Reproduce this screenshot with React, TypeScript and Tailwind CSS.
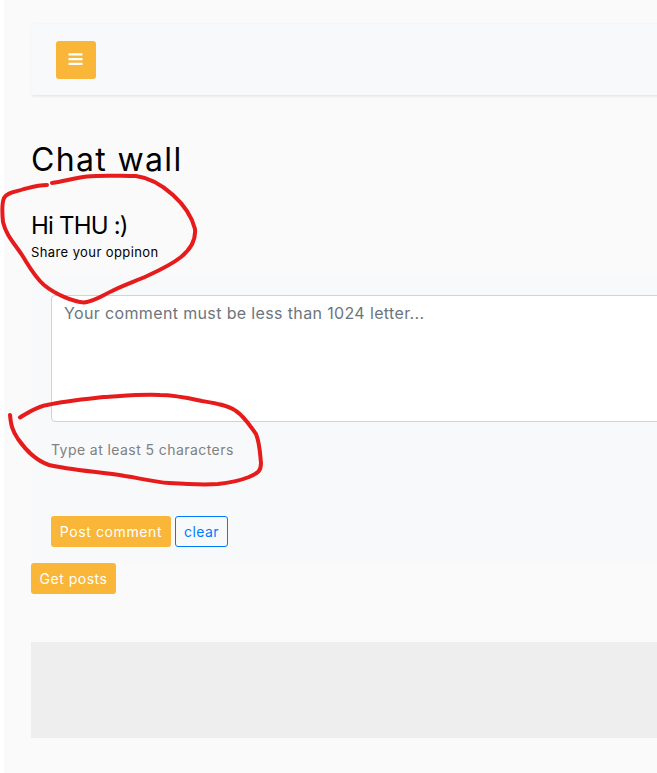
import React from "react";

const yellow =
  "flex items-center justify-center rounded-[3px] bg-[#f9b639] text-[14px] text-white";

export default function App() {
  return (
    <div className="relative h-[773px] w-[657px] overflow-hidden bg-white pl-1 font-['Inter','Open_Sans',sans-serif]">
      <div className="flex h-full flex-col bg-[#fafafa] pl-[27px] pt-6">
        <nav className="-mr-4 flex h-[71px] shrink-0 items-center bg-[#f8f9fb] pl-[25px] shadow-[1px_1px_3px_rgba(0,0,0,0.1)]">
          <button
            aria-label="Menu"
            className="mt-[1px] flex h-[38px] w-10 items-start rounded-[3px] bg-[#f9b639] pl-3 pt-3"
          >
            <svg width="15" height="12" viewBox="0 0 15 12">
              <path
                d="M0.5 0.3h14v2.2h-14zM0.5 5h14v2.2h-14zM0.5 9.7h14v2.2h-14z"
                fill="white"
              />
            </svg>
          </button>
        </nav>

        <h1 className="mt-[45px] h-10 whitespace-nowrap text-[32px] leading-[40px] tracking-[1.35px] text-black">
          Chat wall
        </h1>
        <h2 className="mt-[31px] h-[29px] whitespace-nowrap text-[24px] leading-[29px] tracking-[-0.8px] text-black">
          Hi THU :)
        </h2>
        <p className="mt-[2px] h-5 whitespace-nowrap text-[13px] leading-5 tracking-[0.4px] text-black">
          Share your oppinon
        </p>

        <form className="mt-[13px] h-[288px] shrink-0 bg-[#f8f9fb] pl-5 pt-5">
          <textarea
            placeholder="Your comment must be less than 1024 letter..."
            className="-mr-4 block h-[127px] w-[640px] resize-none overflow-hidden rounded border border-[#ced4da] bg-white px-3 py-[5px] text-[16px] leading-6 tracking-[0.36px] placeholder:text-[#6c757d]"
          />
          <p className="mt-[18px] h-5 whitespace-nowrap text-[14px] leading-5 tracking-[0.43px] text-[#808080]">
            Type at least 5 characters
          </p>
          <div className="mt-[56px] flex gap-1">
            <button type="button" className={yellow + " h-[31px] w-[120px] tracking-[0.6px]"}>
              Post comment
            </button>
            <button
              type="button"
              className="flex h-[31px] w-[53px] items-center justify-center rounded-[3px] border border-[#007bff] text-[14px] tracking-[0.45px] text-[#007bff]"
            >
              clear
            </button>
          </div>
        </form>

        <button
          type="button"
          className={yellow + " h-[31px] w-[85px] shrink-0 tracking-[0.5px]"}
        >
          Get posts
        </button>
        <div className="mt-12 h-24 shrink-0 bg-[#eeeeee]" />
      </div>

      <svg
        className="pointer-events-none absolute left-0 top-0"
        width="657"
        height="773"
        viewBox="0 0 657 773"
        fill="none"
        stroke="#e61c1c"
        strokeWidth="4"
        strokeLinecap="round"
        strokeLinejoin="round"
      >
        <path d="M52 183C62 182 74 178 87 176.500C101 175 119 176 136 176C151 178 162 185 173 195C183 204 192 217 195 229C196 240 191 249 181 257C171 265 158 271 147 276C136 281 124 285 112 291C101 296 95 301 84 302.500C73 302 55 294 44 285C34 276 29 266 22 255C14 243 6 235 3 222C2 212 2 203 4 198C7 192 16 192 24 189C32 187 38 185 47 185" />
        <path d="M20 417.500C29 412 36 407 47 405C65 401 86 399 104 397C122 396 142 394 160 395C175 395 188 398 202 401C214 403 228 405 236 411C245 417 250 426 256 434C260 444 260 454 261 463C261 472 257 473 249 477C239 481 229 483 218 484C203 485 184 484 169 483C154 482 139 478 125 476C101 472 70 470 49 465C34 460 25 449 18 439C12 430 11 425 10 415" />
      </svg>
    </div>
  );
}
